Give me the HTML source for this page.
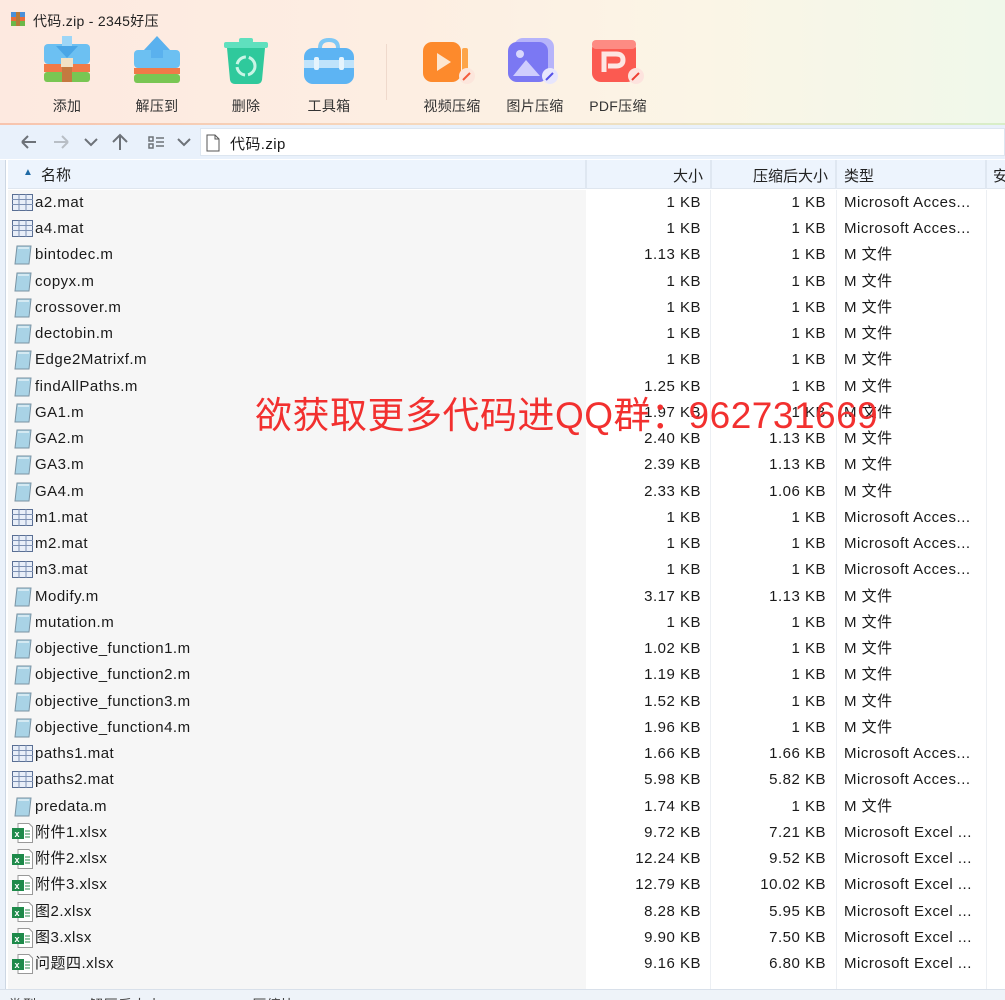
<!DOCTYPE html>
<html><head><meta charset="utf-8">
<style>
*{margin:0;padding:0;box-sizing:border-box}
html,body{width:1005px;height:1000px;overflow:hidden}
body{position:relative;font-family:"Liberation Sans","Noto Sans CJK SC",sans-serif;font-size:14px;color:#1a1a1a;background:#fff}
.top{position:absolute;left:0;top:0;width:1005px;height:124px;background:linear-gradient(90deg,#fde9e0 0%,#fdeee2 40%,#fbf5e6 70%,#f0f8ea 100%)}
.topline{position:absolute;left:0;top:123px;width:1005px;height:2px;background:linear-gradient(90deg,#f7c4ae,#f5dcc0,#d8eec8)}
.title{position:absolute;left:33px;top:11px;font-size:14px;color:#222;letter-spacing:0.3px}
.tb{position:absolute;top:96px;font-size:14px;color:#333;width:80px;text-align:center;letter-spacing:0.3px}
.ic{position:absolute}
.nav{position:absolute;left:0;top:125px;width:1005px;height:34px;background:#e9f1fb}
.addr{position:absolute;left:200px;top:128px;width:805px;height:28px;background:#fff;border:1px solid #dde6f0}
.hdr{position:absolute;left:8px;top:160px;width:997px;height:29px;background:#edf4fd;border-bottom:1px solid #dfe6ef}
.hc{position:absolute;top:6px;font-size:15px;color:#222}
.vs{position:absolute;top:160px;width:2px;height:29px;background:#dfe7f1}
.namecol{position:absolute;left:8px;top:190px;width:578px;height:799px;background:#f6f6f6}
.lstrip{position:absolute;left:0;top:160px;width:6px;height:829px;background:#eaf1fa;border-right:1px solid #cdd7e3}
.cl{position:absolute;top:190px;width:1px;height:799px;background:#eceff3}
.r{position:absolute;left:0;width:1005px;height:26px;font-size:15px;line-height:26px;letter-spacing:0.5px}
.r span{position:absolute;top:0;white-space:nowrap}
.n{left:35px}.s{right:304px}.c{right:179px}.t{left:844px}
.status{position:absolute;left:0;top:989px;width:1005px;height:11px;background:#eef3f9;border-top:1px solid #d8e0ea;overflow:hidden}
.wm{position:absolute;left:255px;top:393px;font-size:37px;color:#f2302f;white-space:nowrap;letter-spacing:0.5px;line-height:46px}
</style></head><body>
<div class="top"></div><div class="topline"></div>
<svg class="ic" style="left:10px;top:10px" width="16" height="18"><rect x="1" y="2" width="14" height="5" fill="#4a90d9"/><rect x="1" y="7" width="14" height="4" fill="#e96d3b"/><rect x="1" y="11" width="14" height="5" fill="#6bb84a"/><rect x="6" y="2" width="4" height="14" fill="#b77a3a"/></svg>
<div class="title">代码.zip - 2345好压</div>
<svg class="ic" style="left:40px;top:36px" width="56" height="52"><rect x="4" y="8" width="46" height="20" rx="4" fill="#6cc0f2"/><rect x="4" y="28" width="46" height="8" fill="#f07a48"/><rect x="4" y="36" width="46" height="10" rx="3" fill="#79c653"/><rect x="22" y="0" width="10" height="12" fill="#9dd6f7"/><path d="M16 10 L38 10 L27 22Z" fill="#4aa6e6"/><rect x="22" y="24" width="10" height="22" fill="#c47a40"/><rect x="21" y="22" width="12" height="9" fill="#f2e1c4"/></svg>
<svg class="ic" style="left:132px;top:36px" width="50" height="52"><rect x="2" y="14" width="46" height="18" rx="4" fill="#6cc0f2"/><rect x="2" y="32" width="46" height="6" fill="#f07a48"/><rect x="2" y="38" width="46" height="9" rx="3" fill="#79c653"/><path d="M25 0 L38 14 L31 14 L31 22 L19 22 L19 14 L12 14Z" fill="#5ab1ee"/></svg>
<svg class="ic" style="left:221px;top:36px" width="50" height="52"><rect x="3" y="6" width="44" height="6" rx="2" fill="#5fe0be"/><rect x="18" y="2" width="14" height="5" rx="2" fill="#5fe0be"/><path d="M6 12 L44 12 L41 44 Q40 48 36 48 L14 48 Q10 48 9 44Z" fill="#2fc99c"/><circle cx="25" cy="30" r="9" fill="none" stroke="#c9f5e6" stroke-width="3" stroke-dasharray="12 3"/></svg>
<svg class="ic" style="left:302px;top:38px" width="54" height="50"><path d="M18 10 Q18 2 27 2 Q36 2 36 10" fill="none" stroke="#7ec8f5" stroke-width="4"/><rect x="2" y="10" width="50" height="36" rx="9" fill="#5db4f3"/><rect x="2" y="22" width="50" height="8" fill="#bfe3fb"/><rect x="12" y="19" width="5" height="13" rx="2" fill="#e5f4fd"/><rect x="37" y="19" width="5" height="13" rx="2" fill="#e5f4fd"/></svg>
<div style="position:absolute;left:386px;top:44px;width:1px;height:56px;background:#efd9cc"></div>
<svg class="ic" style="left:423px;top:40px" width="56" height="46"><rect x="0" y="2" width="38" height="40" rx="9" fill="#fd8a2c"/><rect x="39" y="8" width="6" height="28" rx="2" fill="#fda54a"/><path d="M14 13 L28 22 L14 31Z" fill="#fde6cf"/><circle cx="44" cy="36" r="8" fill="#fce6dc"/><path d="M40 40 L47 33" stroke="#f45b3c" stroke-width="2"/></svg>
<svg class="ic" style="left:508px;top:38px" width="56" height="48"><rect x="6" y="0" width="40" height="40" rx="9" fill="#b6b4fa"/><rect x="0" y="4" width="40" height="40" rx="9" fill="#7b78f3"/><circle cx="12" cy="16" r="4" fill="#d9d8fd"/><path d="M5 38 L18 22 L32 38Z" fill="#cfcdfd"/><circle cx="42" cy="38" r="8" fill="#e7e6fd"/><path d="M38 42 L45 35" stroke="#5552e8" stroke-width="2"/></svg>
<svg class="ic" style="left:592px;top:40px" width="56" height="46"><rect x="0" y="0" width="44" height="42" rx="9" fill="#fb5a51"/><rect x="0" y="0" width="44" height="9" rx="4" fill="#fd8b83"/><path d="M12 32 L12 14 L24 14 Q31 14 31 20 Q31 26 24 26 L16 26" fill="none" stroke="#fde6e3" stroke-width="5"/><circle cx="44" cy="36" r="8" fill="#fde3de"/><path d="M40 40 L47 33" stroke="#ee3d32" stroke-width="2"/></svg>
<div class="tb" style="left:27px">添加</div>
<div class="tb" style="left:117px">解压到</div>
<div class="tb" style="left:206px">删除</div>
<div class="tb" style="left:289px">工具箱</div>
<div class="tb" style="left:412px">视频压缩</div>
<div class="tb" style="left:495px">图片压缩</div>
<div class="tb" style="left:578px">PDF压缩</div>
<div class="nav"></div>
<svg class="ic" style="left:18px;top:131px" width="180" height="22" fill="none" stroke-width="2">
<path d="M4 11 H18 M4 11 L10 5 M4 11 L10 17" stroke="#6d7278"/>
<path d="M36 11 H50 M50 11 L44 5 M50 11 L44 17" stroke="#b8bec5"/>
<path d="M67 8 L73 14 L79 8" stroke="#6d7278"/>
<path d="M102 4 V19 M95 11 L102 4 L109 11" stroke="#6d7278"/>
<path d="M131 6 h4 v4 h-4z M131 13 h4 v4 h-4z M138 7 h8 M138 11 h8 M138 15 h8" stroke="#6d7278" stroke-width="1.5"/>
<path d="M160 8 L166 14 L172 8" stroke="#6d7278"/></svg>
<div class="addr"></div>
<svg class="ic" style="left:206px;top:134px" width="14" height="18"><path d="M1 1 H9 L13 5 V17 H1Z M9 1 V5 H13" fill="#fff" stroke="#555" stroke-width="1"/></svg>
<div style="position:absolute;left:230px;top:133px;font-size:15px;letter-spacing:0.4px">代码.zip</div>
<div class="lstrip"></div>
<div class="hdr"></div>
<div class="vs" style="left:585px"></div><div class="vs" style="left:710px"></div><div class="vs" style="left:835px"></div><div class="vs" style="left:985px"></div>
<div style="position:absolute;left:23px;top:167px;font-size:10px;color:#1f6aa5">&#9650;</div>
<div class="hc" style="left:41px;top:164px">名称</div>
<div class="hc" style="right:302px;top:165px">大小</div>
<div class="hc" style="right:177px;top:165px">压缩后大小</div>
<div class="hc" style="left:844px;top:165px">类型</div>
<div class="hc" style="left:993px;top:165px">安</div>
<div class="namecol"></div>
<div class="cl" style="left:710px"></div><div class="cl" style="left:836px"></div><div class="cl" style="left:986px"></div>
<div class="r" style="top:190px"><svg class="ic" style="left:12px;top:4px" width="21" height="17"><rect x="0.5" y="0.5" width="20" height="16" fill="#e8eef8" stroke="#5a6f94"/><path d="M0 5.5H21M0 10.5H21M7 0V17M14 0V17" stroke="#7c90b3"/></svg><span class="n">a2.mat</span><span class="s">1 KB</span><span class="c">1 KB</span><span class="t">Microsoft Acces...</span></div>
<div class="r" style="top:216px"><svg class="ic" style="left:12px;top:4px" width="21" height="17"><rect x="0.5" y="0.5" width="20" height="16" fill="#e8eef8" stroke="#5a6f94"/><path d="M0 5.5H21M0 10.5H21M7 0V17M14 0V17" stroke="#7c90b3"/></svg><span class="n">a4.mat</span><span class="s">1 KB</span><span class="c">1 KB</span><span class="t">Microsoft Acces...</span></div>
<div class="r" style="top:242px"><svg class="ic" style="left:13px;top:3px" width="20" height="20"><path d="M4 1 H18 L16 19 H2Z" fill="#a9d3e6" stroke="#7a93a3"/><path d="M5 3H16" stroke="#fff"/></svg><span class="n">bintodec.m</span><span class="s">1.13 KB</span><span class="c">1 KB</span><span class="t">M 文件</span></div>
<div class="r" style="top:269px"><svg class="ic" style="left:13px;top:3px" width="20" height="20"><path d="M4 1 H18 L16 19 H2Z" fill="#a9d3e6" stroke="#7a93a3"/><path d="M5 3H16" stroke="#fff"/></svg><span class="n">copyx.m</span><span class="s">1 KB</span><span class="c">1 KB</span><span class="t">M 文件</span></div>
<div class="r" style="top:295px"><svg class="ic" style="left:13px;top:3px" width="20" height="20"><path d="M4 1 H18 L16 19 H2Z" fill="#a9d3e6" stroke="#7a93a3"/><path d="M5 3H16" stroke="#fff"/></svg><span class="n">crossover.m</span><span class="s">1 KB</span><span class="c">1 KB</span><span class="t">M 文件</span></div>
<div class="r" style="top:321px"><svg class="ic" style="left:13px;top:3px" width="20" height="20"><path d="M4 1 H18 L16 19 H2Z" fill="#a9d3e6" stroke="#7a93a3"/><path d="M5 3H16" stroke="#fff"/></svg><span class="n">dectobin.m</span><span class="s">1 KB</span><span class="c">1 KB</span><span class="t">M 文件</span></div>
<div class="r" style="top:347px"><svg class="ic" style="left:13px;top:3px" width="20" height="20"><path d="M4 1 H18 L16 19 H2Z" fill="#a9d3e6" stroke="#7a93a3"/><path d="M5 3H16" stroke="#fff"/></svg><span class="n">Edge2Matrixf.m</span><span class="s">1 KB</span><span class="c">1 KB</span><span class="t">M 文件</span></div>
<div class="r" style="top:374px"><svg class="ic" style="left:13px;top:3px" width="20" height="20"><path d="M4 1 H18 L16 19 H2Z" fill="#a9d3e6" stroke="#7a93a3"/><path d="M5 3H16" stroke="#fff"/></svg><span class="n">findAllPaths.m</span><span class="s">1.25 KB</span><span class="c">1 KB</span><span class="t">M 文件</span></div>
<div class="r" style="top:400px"><svg class="ic" style="left:13px;top:3px" width="20" height="20"><path d="M4 1 H18 L16 19 H2Z" fill="#a9d3e6" stroke="#7a93a3"/><path d="M5 3H16" stroke="#fff"/></svg><span class="n">GA1.m</span><span class="s">1.97 KB</span><span class="c">1 KB</span><span class="t">M 文件</span></div>
<div class="r" style="top:426px"><svg class="ic" style="left:13px;top:3px" width="20" height="20"><path d="M4 1 H18 L16 19 H2Z" fill="#a9d3e6" stroke="#7a93a3"/><path d="M5 3H16" stroke="#fff"/></svg><span class="n">GA2.m</span><span class="s">2.40 KB</span><span class="c">1.13 KB</span><span class="t">M 文件</span></div>
<div class="r" style="top:452px"><svg class="ic" style="left:13px;top:3px" width="20" height="20"><path d="M4 1 H18 L16 19 H2Z" fill="#a9d3e6" stroke="#7a93a3"/><path d="M5 3H16" stroke="#fff"/></svg><span class="n">GA3.m</span><span class="s">2.39 KB</span><span class="c">1.13 KB</span><span class="t">M 文件</span></div>
<div class="r" style="top:479px"><svg class="ic" style="left:13px;top:3px" width="20" height="20"><path d="M4 1 H18 L16 19 H2Z" fill="#a9d3e6" stroke="#7a93a3"/><path d="M5 3H16" stroke="#fff"/></svg><span class="n">GA4.m</span><span class="s">2.33 KB</span><span class="c">1.06 KB</span><span class="t">M 文件</span></div>
<div class="r" style="top:505px"><svg class="ic" style="left:12px;top:4px" width="21" height="17"><rect x="0.5" y="0.5" width="20" height="16" fill="#e8eef8" stroke="#5a6f94"/><path d="M0 5.5H21M0 10.5H21M7 0V17M14 0V17" stroke="#7c90b3"/></svg><span class="n">m1.mat</span><span class="s">1 KB</span><span class="c">1 KB</span><span class="t">Microsoft Acces...</span></div>
<div class="r" style="top:531px"><svg class="ic" style="left:12px;top:4px" width="21" height="17"><rect x="0.5" y="0.5" width="20" height="16" fill="#e8eef8" stroke="#5a6f94"/><path d="M0 5.5H21M0 10.5H21M7 0V17M14 0V17" stroke="#7c90b3"/></svg><span class="n">m2.mat</span><span class="s">1 KB</span><span class="c">1 KB</span><span class="t">Microsoft Acces...</span></div>
<div class="r" style="top:557px"><svg class="ic" style="left:12px;top:4px" width="21" height="17"><rect x="0.5" y="0.5" width="20" height="16" fill="#e8eef8" stroke="#5a6f94"/><path d="M0 5.5H21M0 10.5H21M7 0V17M14 0V17" stroke="#7c90b3"/></svg><span class="n">m3.mat</span><span class="s">1 KB</span><span class="c">1 KB</span><span class="t">Microsoft Acces...</span></div>
<div class="r" style="top:584px"><svg class="ic" style="left:13px;top:3px" width="20" height="20"><path d="M4 1 H18 L16 19 H2Z" fill="#a9d3e6" stroke="#7a93a3"/><path d="M5 3H16" stroke="#fff"/></svg><span class="n">Modify.m</span><span class="s">3.17 KB</span><span class="c">1.13 KB</span><span class="t">M 文件</span></div>
<div class="r" style="top:610px"><svg class="ic" style="left:13px;top:3px" width="20" height="20"><path d="M4 1 H18 L16 19 H2Z" fill="#a9d3e6" stroke="#7a93a3"/><path d="M5 3H16" stroke="#fff"/></svg><span class="n">mutation.m</span><span class="s">1 KB</span><span class="c">1 KB</span><span class="t">M 文件</span></div>
<div class="r" style="top:636px"><svg class="ic" style="left:13px;top:3px" width="20" height="20"><path d="M4 1 H18 L16 19 H2Z" fill="#a9d3e6" stroke="#7a93a3"/><path d="M5 3H16" stroke="#fff"/></svg><span class="n">objective_function1.m</span><span class="s">1.02 KB</span><span class="c">1 KB</span><span class="t">M 文件</span></div>
<div class="r" style="top:662px"><svg class="ic" style="left:13px;top:3px" width="20" height="20"><path d="M4 1 H18 L16 19 H2Z" fill="#a9d3e6" stroke="#7a93a3"/><path d="M5 3H16" stroke="#fff"/></svg><span class="n">objective_function2.m</span><span class="s">1.19 KB</span><span class="c">1 KB</span><span class="t">M 文件</span></div>
<div class="r" style="top:689px"><svg class="ic" style="left:13px;top:3px" width="20" height="20"><path d="M4 1 H18 L16 19 H2Z" fill="#a9d3e6" stroke="#7a93a3"/><path d="M5 3H16" stroke="#fff"/></svg><span class="n">objective_function3.m</span><span class="s">1.52 KB</span><span class="c">1 KB</span><span class="t">M 文件</span></div>
<div class="r" style="top:715px"><svg class="ic" style="left:13px;top:3px" width="20" height="20"><path d="M4 1 H18 L16 19 H2Z" fill="#a9d3e6" stroke="#7a93a3"/><path d="M5 3H16" stroke="#fff"/></svg><span class="n">objective_function4.m</span><span class="s">1.96 KB</span><span class="c">1 KB</span><span class="t">M 文件</span></div>
<div class="r" style="top:741px"><svg class="ic" style="left:12px;top:4px" width="21" height="17"><rect x="0.5" y="0.5" width="20" height="16" fill="#e8eef8" stroke="#5a6f94"/><path d="M0 5.5H21M0 10.5H21M7 0V17M14 0V17" stroke="#7c90b3"/></svg><span class="n">paths1.mat</span><span class="s">1.66 KB</span><span class="c">1.66 KB</span><span class="t">Microsoft Acces...</span></div>
<div class="r" style="top:767px"><svg class="ic" style="left:12px;top:4px" width="21" height="17"><rect x="0.5" y="0.5" width="20" height="16" fill="#e8eef8" stroke="#5a6f94"/><path d="M0 5.5H21M0 10.5H21M7 0V17M14 0V17" stroke="#7c90b3"/></svg><span class="n">paths2.mat</span><span class="s">5.98 KB</span><span class="c">5.82 KB</span><span class="t">Microsoft Acces...</span></div>
<div class="r" style="top:794px"><svg class="ic" style="left:13px;top:3px" width="20" height="20"><path d="M4 1 H18 L16 19 H2Z" fill="#a9d3e6" stroke="#7a93a3"/><path d="M5 3H16" stroke="#fff"/></svg><span class="n">predata.m</span><span class="s">1.74 KB</span><span class="c">1 KB</span><span class="t">M 文件</span></div>
<div class="r" style="top:820px"><svg class="ic" style="left:12px;top:3px" width="21" height="20"><path d="M6 0.5H17L20.5 4V19.5H6Z" fill="#fff" stroke="#999"/><rect x="0" y="5" width="12" height="11" fill="#1e8a4a"/><text x="2.5" y="14" font-size="9" fill="#fff" font-family="Liberation Sans" font-weight="bold">x</text><path d="M13 8H18M13 11H18M13 14H18" stroke="#2d8a4e"/></svg><span class="n">附件1.xlsx</span><span class="s">9.72 KB</span><span class="c">7.21 KB</span><span class="t">Microsoft Excel ...</span></div>
<div class="r" style="top:846px"><svg class="ic" style="left:12px;top:3px" width="21" height="20"><path d="M6 0.5H17L20.5 4V19.5H6Z" fill="#fff" stroke="#999"/><rect x="0" y="5" width="12" height="11" fill="#1e8a4a"/><text x="2.5" y="14" font-size="9" fill="#fff" font-family="Liberation Sans" font-weight="bold">x</text><path d="M13 8H18M13 11H18M13 14H18" stroke="#2d8a4e"/></svg><span class="n">附件2.xlsx</span><span class="s">12.24 KB</span><span class="c">9.52 KB</span><span class="t">Microsoft Excel ...</span></div>
<div class="r" style="top:872px"><svg class="ic" style="left:12px;top:3px" width="21" height="20"><path d="M6 0.5H17L20.5 4V19.5H6Z" fill="#fff" stroke="#999"/><rect x="0" y="5" width="12" height="11" fill="#1e8a4a"/><text x="2.5" y="14" font-size="9" fill="#fff" font-family="Liberation Sans" font-weight="bold">x</text><path d="M13 8H18M13 11H18M13 14H18" stroke="#2d8a4e"/></svg><span class="n">附件3.xlsx</span><span class="s">12.79 KB</span><span class="c">10.02 KB</span><span class="t">Microsoft Excel ...</span></div>
<div class="r" style="top:899px"><svg class="ic" style="left:12px;top:3px" width="21" height="20"><path d="M6 0.5H17L20.5 4V19.5H6Z" fill="#fff" stroke="#999"/><rect x="0" y="5" width="12" height="11" fill="#1e8a4a"/><text x="2.5" y="14" font-size="9" fill="#fff" font-family="Liberation Sans" font-weight="bold">x</text><path d="M13 8H18M13 11H18M13 14H18" stroke="#2d8a4e"/></svg><span class="n">图2.xlsx</span><span class="s">8.28 KB</span><span class="c">5.95 KB</span><span class="t">Microsoft Excel ...</span></div>
<div class="r" style="top:925px"><svg class="ic" style="left:12px;top:3px" width="21" height="20"><path d="M6 0.5H17L20.5 4V19.5H6Z" fill="#fff" stroke="#999"/><rect x="0" y="5" width="12" height="11" fill="#1e8a4a"/><text x="2.5" y="14" font-size="9" fill="#fff" font-family="Liberation Sans" font-weight="bold">x</text><path d="M13 8H18M13 11H18M13 14H18" stroke="#2d8a4e"/></svg><span class="n">图3.xlsx</span><span class="s">9.90 KB</span><span class="c">7.50 KB</span><span class="t">Microsoft Excel ...</span></div>
<div class="r" style="top:951px"><svg class="ic" style="left:12px;top:3px" width="21" height="20"><path d="M6 0.5H17L20.5 4V19.5H6Z" fill="#fff" stroke="#999"/><rect x="0" y="5" width="12" height="11" fill="#1e8a4a"/><text x="2.5" y="14" font-size="9" fill="#fff" font-family="Liberation Sans" font-weight="bold">x</text><path d="M13 8H18M13 11H18M13 14H18" stroke="#2d8a4e"/></svg><span class="n">问题四.xlsx</span><span class="s">9.16 KB</span><span class="c">6.80 KB</span><span class="t">Microsoft Excel ...</span></div>
<div class="wm">欲获取更多代码进QQ群：962731669</div>
<div class="status"><div style="position:absolute;left:8px;top:5px;font-size:14px;color:#444;white-space:nowrap;letter-spacing:0.5px">类型：ZIP　解压后大小：96.03 KB　压缩比：70.00%</div></div>
</body></html>
